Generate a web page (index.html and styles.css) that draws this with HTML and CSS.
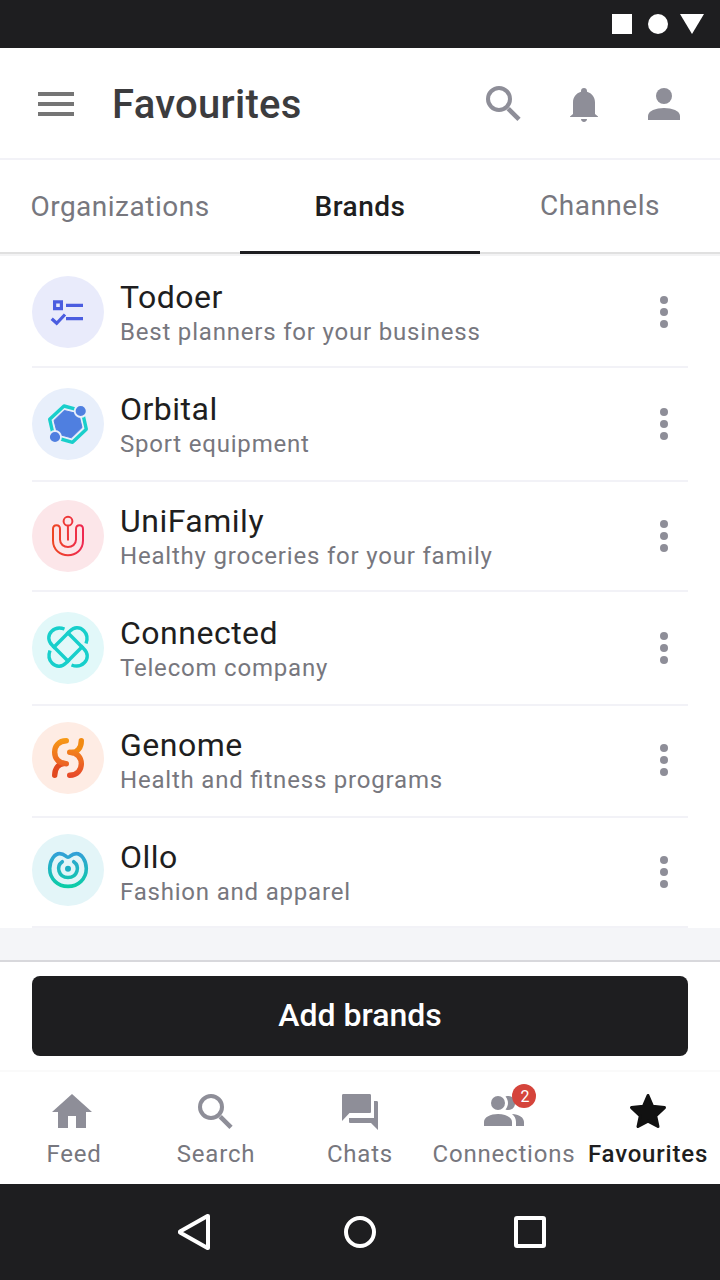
FILE: index.html
```html
<!DOCTYPE html>
<html lang="en">
<head>
  <meta charset="UTF-8">
  <meta name="viewport" content="width=device-width, initial-scale=1.0">
  <title>Favourites</title>
  <link rel="stylesheet" href="styles.css">
</head>
<body>
  <div class="status-bar">
    <svg width="92" height="20" viewBox="0 0 92 20" fill="#fff">
      <rect width="20" height="20"/>
      <circle cx="46" cy="10" r="10"/>
      <path d="M68 0h24L80 20z"/>
    </svg>
  </div>

  <header class="header">
    <svg class="menu-icon" width="36" height="24" viewBox="0 0 36 24" fill="#757575">
      <path d="M0 0h36v4H0zM0 10h36v4H0zM0 20h36v4H0z"/>
    </svg>
    <h1 class="title">Favourites</h1>
    <div class="header-actions">
      <svg class="icon" width="48" height="48" viewBox="0 0 48 48">
        <circle cx="19" cy="19" r="11" fill="none" stroke="#8e8e98" stroke-width="4"/>
        <path d="M28.2 28.7L39 39.3" stroke="#8e8e98" stroke-width="4.6"/>
      </svg>
      <svg class="icon" width="48" height="48" viewBox="0 0 48 48">
        <path d="M24 8c1.8 0 3 1.2 3 3v.8c5 1.500 8 5.500 8 10.700V34l3 2.500V37H10v-.5l3-2.500V22.500c0-5.200 3-9.200 8-10.700V11c0-1.800 1.200-3 3-3zM21 39h6c0 1.700-1.300 2.900-3 2.900s-3-1.200-3-2.900z"/>
      </svg>
      <svg class="icon" width="48" height="48" viewBox="0 0 48 48">
        <circle cx="24" cy="16" r="8"/>
        <path d="M8 40v-4c0-5.300 8-8 16-8s16 2.700 16 8v4z"/>
      </svg>
    </div>
  </header>

  <nav class="tabs">
    <a class="tab">Organizations</a>
    <a class="tab active">Brands</a>
    <a class="tab channels">Channels</a>
  </nav>

  <main class="brands">
    <div class="brand">
      <svg class="avatar" width="72" height="72" viewBox="0 0 72 72">
        <circle cx="36" cy="36" r="36" fill="#e9ebfb"/>
        <g fill="none" stroke="#4b5de0" stroke-width="3.2">
          <path d="M22.600 25.800h6.800v6.800h-6.800zM34 29.300h17M34 42.700h17M19.700 42.700l5 4.600 8.300-8.800"/>
        </g>
      </svg>
      <div class="info">
        <div class="name">Todoer</div>
        <div class="desc">Best planners for your business</div>
      </div>
      <div class="more"><i></i><i></i><i></i></div>
    </div>
    <div class="brand tall">
      <svg class="avatar" width="72" height="72" viewBox="0 0 72 72">
        <circle cx="36" cy="36" r="36" fill="#e8effb"/>
        <path d="M32 18L50.200 22.800 54.300 41.200 40.500 54.300 21.700 49 17.700 31.300z" fill="none" stroke="#19cfcb" stroke-width="3.400" stroke-linejoin="round"/>
        <path d="M32.300 22.500L46.800 26 50 39.500 39.400 49.800 25.500 46 22 32.500z" fill="#4f7fe0" stroke="#4f7fe0" stroke-linejoin="round"/>
        <circle cx="48.700" cy="23" r="6" fill="#4f7fe0" stroke="#e8effb" stroke-width="1.800"/>
        <circle cx="23" cy="49" r="6" fill="#4f7fe0" stroke="#e8effb" stroke-width="1.800"/>
      </svg>
      <div class="info">
        <div class="name">Orbital</div>
        <div class="desc">Sport equipment</div>
      </div>
      <div class="more"><i></i><i></i><i></i></div>
    </div>
    <div class="brand short">
      <svg class="avatar" width="72" height="72" viewBox="0 0 72 72">
        <defs>
          <linearGradient id="uni" gradientUnits="userSpaceOnUse" x1="20" y1="0" x2="52" y2="0">
            <stop offset="0" stop-color="#ee4722"/>
            <stop offset="1" stop-color="#ee2852"/>
          </linearGradient>
        </defs>
        <circle cx="36" cy="36" r="36" fill="#fce6e9"/>
        <g fill="none" stroke="url(#uni)" stroke-width="2">
          <circle cx="36" cy="21.200" r="4.400"/>
          <path d="M35.900 25.500L36 40.500M21 29c0-5 7-5 7 0v10.500c0 10 16 10 16 0V29c0-5 7-5 7 0v11.500c0 19.500-30 19.500-30 0z"/>
        </g>
      </svg>
      <div class="info">
        <div class="name">UniFamily</div>
        <div class="desc">Healthy groceries for your family</div>
      </div>
      <div class="more"><i></i><i></i><i></i></div>
    </div>
    <div class="brand tall">
      <svg class="avatar" width="72" height="72" viewBox="0 0 72 72">
        <defs>
          <path id="arm" d="M54 31.500c1.500-4 1.300-9.300-2.200-12.800-4.200-4.200-9.800-3.700-13.800.3L20.800 36.200"/>
        </defs>
        <circle cx="36" cy="36" r="36" fill="#e2f8f9"/>
        <g fill="none" stroke="#17cfcb" stroke-width="3.400">
          <use href="#arm"/>
          <use href="#arm" transform="rotate(90 36 35)"/>
          <use href="#arm" transform="rotate(180 36 35)"/>
          <use href="#arm" transform="rotate(270 36 35)"/>
        </g>
      </svg>
      <div class="info">
        <div class="name">Connected</div>
        <div class="desc">Telecom company</div>
      </div>
      <div class="more"><i></i><i></i><i></i></div>
    </div>
    <div class="brand raised">
      <svg class="avatar" width="72" height="72" viewBox="0 0 72 72">
        <defs>
          <linearGradient id="genome" gradientUnits="userSpaceOnUse" x1="0" y1="16" x2="0" y2="56">
            <stop offset="0" stop-color="#f79b16"/>
            <stop offset="1" stop-color="#e6462a"/>
          </linearGradient>
        </defs>
        <circle cx="36" cy="36" r="36" fill="#feece4"/>
        <g fill="none" stroke-width="5.400" stroke-linecap="round">
          <path d="M49.300 18.700c0 7-4 11.500-9 11.800" stroke="#f28a12"/>
          <path d="M22.700 53.300c0-7 4-11.500 9-11.800" stroke="#e24a20"/>
          <path d="M34.300 18.700c-15.500 0-15.500 23 0 23M37.700 30.300c15.500 0 15.500 23 0 23" stroke="url(#genome)"/>
        </g>
      </svg>
      <div class="info">
        <div class="name">Genome</div>
        <div class="desc">Health and fitness programs</div>
      </div>
      <div class="more"><i></i><i></i><i></i></div>
    </div>
    <div class="brand short raised">
      <svg class="avatar" width="72" height="72" viewBox="0 0 72 72">
        <defs>
          <linearGradient id="ollo" gradientUnits="userSpaceOnUse" x1="0" y1="18" x2="0" y2="54">
            <stop offset="0" stop-color="#349fd9"/>
            <stop offset="1" stop-color="#0acfa5"/>
          </linearGradient>
        </defs>
        <circle cx="36" cy="36" r="36" fill="#e3f5f8"/>
        <g fill="none" stroke="url(#ollo)" stroke-width="3.600" stroke-linecap="round">
          <path d="M36 23.200c-2.500 0-3-3.600-8.300-3.600-5 0-10 6.500-10 15 0 10.300 8 17.800 18.300 17.800s18.300-7.500 18.300-17.800c0-8.500-5-15-10-15-5.300 0-5.800 3.600-8.300 3.600z"/>
          <path d="M30.300 27.700c-6.500 4.500-4 15.800 5.700 15.800s12.200-11.300 5.700-15.800"/>
        </g>
        <circle cx="36" cy="34.800" r="3" fill="#1caec2"/>
      </svg>
      <div class="info">
        <div class="name">Ollo</div>
        <div class="desc">Fashion and apparel</div>
      </div>
      <div class="more"><i></i><i></i><i></i></div>
    </div>
  </main>

  <div class="add-bar">
    <button class="add-button">Add brands</button>
  </div>

  <nav class="bottom-nav">
    <a class="nav-item">
      <svg class="icon" width="48" height="48" viewBox="0 0 48 48">
        <path d="M24 6l20 18h-6v16H28V28h-8v12H10V24H4z"/>
      </svg>
      <span class="feed-label">Feed</span>
    </a>
    <a class="nav-item">
      <svg class="icon" width="48" height="48" viewBox="0 0 48 48">
        <circle cx="19" cy="19" r="11" fill="none" stroke="#8e8e98" stroke-width="4"/>
        <path d="M28.2 28.7L39 39.3" stroke="#8e8e98" stroke-width="4.6"/>
      </svg>
      <span>Search</span>
    </a>
    <a class="nav-item">
      <svg class="icon" width="48" height="48" viewBox="0 0 48 48">
        <path d="M7.500 6h26c1 0 1.500.5 1.500 1.500v16c0 1-.5 1.500-1.500 1.500H13.500L6 33V7.500C6 6.500 6.500 6 7.500 6z"/>
        <path d="M38 13h2.500c1 0 1.500.5 1.500 1.500V42l-7-7H14.500c-1 0-1.500-.5-1.500-1.500V30h25z"/>
      </svg>
      <span>Chats</span>
    </a>
    <a class="nav-item">
      <svg class="icon" width="48" height="48" viewBox="0 0 48 48">
        <circle cx="18" cy="15" r="7"/>
        <path d="M4 38v-4c0-4.800 6.500-8 14-8s14 3.200 14 8v4zM25.500 8.500c2-.7 4.500-.7 6.500.5 5 3 4 13-3.500 13-1 0-2-.2-3-.6 3.300-3.800 3.300-9 0-12.900zM32 26c7 .3 12 3.500 12 8v4h-8v-4c0-3.300-1.300-6-4-8z"/>
      </svg>
      <b class="badge">2</b>
      <span>Connections</span>
    </a>
    <a class="nav-item active">
      <svg class="icon" width="48" height="48" viewBox="0 0 48 48">
        <path d="M24 7.500l4.600 10.800L40.500 19.600l-8.800 8.200L34 38.500l-10-5.300-10 5.300 2.300-10.700L7.500 19.600l11.900-1.300z" stroke="#111" stroke-width="3" stroke-linejoin="round"/>
      </svg>
      <span>Favourites</span>
    </a>
  </nav>

  <footer class="system-bar">
    <svg width="372" height="40" viewBox="0 0 372 40" fill="none" stroke="#fff" stroke-width="4" stroke-linejoin="round">
      <path d="M34 4h-.5L6 19.500v1L33.500 36h.5z"/>
      <circle cx="186" cy="20" r="14"/>
      <rect x="342" y="6" width="28" height="28" rx="1"/>
    </svg>
  </footer>
</body>
</html>
```
FILE: styles.css
```css
* {
  box-sizing: border-box;
}

body {
  margin: 0;
  width: 720px;
  height: 1280px;
  overflow: hidden;
  display: flex;
  flex-direction: column;
  font-family: Roboto, "Liberation Sans", sans-serif;
  background-color: #f4f5f8;
  color: #1e1e20;
}

svg {
  display: block;
  flex-shrink: 0;
}

.icon {
  fill: #8e8e98;
}

.status-bar {
  display: flex;
  justify-content: flex-end;
  align-items: center;
  height: 48px;
  padding-right: 16px;
  background: #1e1e20;
}

.header {
  display: flex;
  align-items: center;
  height: 112px;
  padding: 2px 32px 0 38px;
  background: white;
  border-bottom: 2px solid #f2f2f7;
}

.title {
  flex: 1;
  margin: 2px 0 0 38px;
  font-size: 40px;
  font-weight: 500;
  line-height: 48px;
  letter-spacing: 0.28px;
  color: #3c3c3e;
}

.header-actions {
  display: flex;
  gap: 32px;
}

.tabs {
  display: flex;
  height: 96px;
  background: white;
  border-bottom: 2px solid #f3f3f4;
  box-shadow: inset 0 -2px #e0e0e0;
}

.tab {
  flex: 1;
  padding-top: 30px;
  font-size: 28px;
  line-height: 34px;
  letter-spacing: 0.5px;
  text-align: center;
  color: #77777e;
}

.tab.channels {
  padding-top: 29px;
}

.tab.active {
  font-weight: 500;
  color: #1e1e20;
  border-bottom: 3px solid #1e1e20;
}

.brands {
  padding: 0 32px;
  background: white;
}

.brand {
  display: flex;
  align-items: flex-start;
  height: 112px;
  padding-top: 20px;
  border-bottom: 2px solid #f2f2f7;
}

.brand.tall {
  height: 114px;
}

.brand.short {
  height: 110px;
}

.brand.short,
.brand.raised {
  padding-top: 18px;
}

.brand.raised .avatar {
  margin-top: -2px;
}

.info {
  flex: 1;
  margin-left: 16px;
}

.name {
  margin-top: 2px;
  font-size: 32px;
  line-height: 38px;
  letter-spacing: 0.5px;
}

.desc {
  margin-top: 1px;
  font-size: 24px;
  line-height: 30px;
  letter-spacing: 0.8px;
  font-feature-settings: "liga" 1;
  color: #77777e;
}

.more {
  display: flex;
  flex-direction: column;
  gap: 4px;
  margin: 20px 20px 0 0;
}

.more i {
  width: 8px;
  height: 8px;
  border-radius: 50%;
  background: #8e8e98;
}

.add-bar {
  height: 112px;
  margin-top: 32px;
  padding: 14px 32px;
  background: white;
  border-top: 2px solid #d8d8dc;
  border-bottom: 2px solid #fafafa;
}

.add-button {
  display: block;
  width: 100%;
  height: 80px;
  padding: 0 0 2px;
  font-family: inherit;
  font-size: 32px;
  font-weight: 500;
  color: white;
  background: #1e1e20;
  border: none;
  border-radius: 8px;
}

.bottom-nav {
  display: flex;
  height: 112px;
  background: white;
}

.nav-item {
  position: relative;
  display: flex;
  flex-direction: column;
  align-items: center;
  width: 144px;
  padding-top: 16px;
  font-size: 24px;
  line-height: 30px;
  letter-spacing: 0.8px;
  color: #77777e;
}

.nav-item span {
  margin-top: 3px;
}

.nav-item .feed-label {
  margin-left: 4px;
}

.nav-item.active {
  font-weight: 500;
  color: #1e1e20;
}

.nav-item.active .icon {
  fill: #111;
}

.badge {
  position: absolute;
  top: 12px;
  left: 80px;
  width: 24px;
  height: 24px;
  border-radius: 50%;
  background: #d5443b;
  font-size: 16px;
  font-weight: 400;
  line-height: 25px;
  letter-spacing: 0;
  text-align: center;
  text-indent: 2px;
  color: white;
}

.system-bar {
  display: flex;
  flex: 1;
  justify-content: center;
  align-items: center;
  background: #1e1e20;
}
```
